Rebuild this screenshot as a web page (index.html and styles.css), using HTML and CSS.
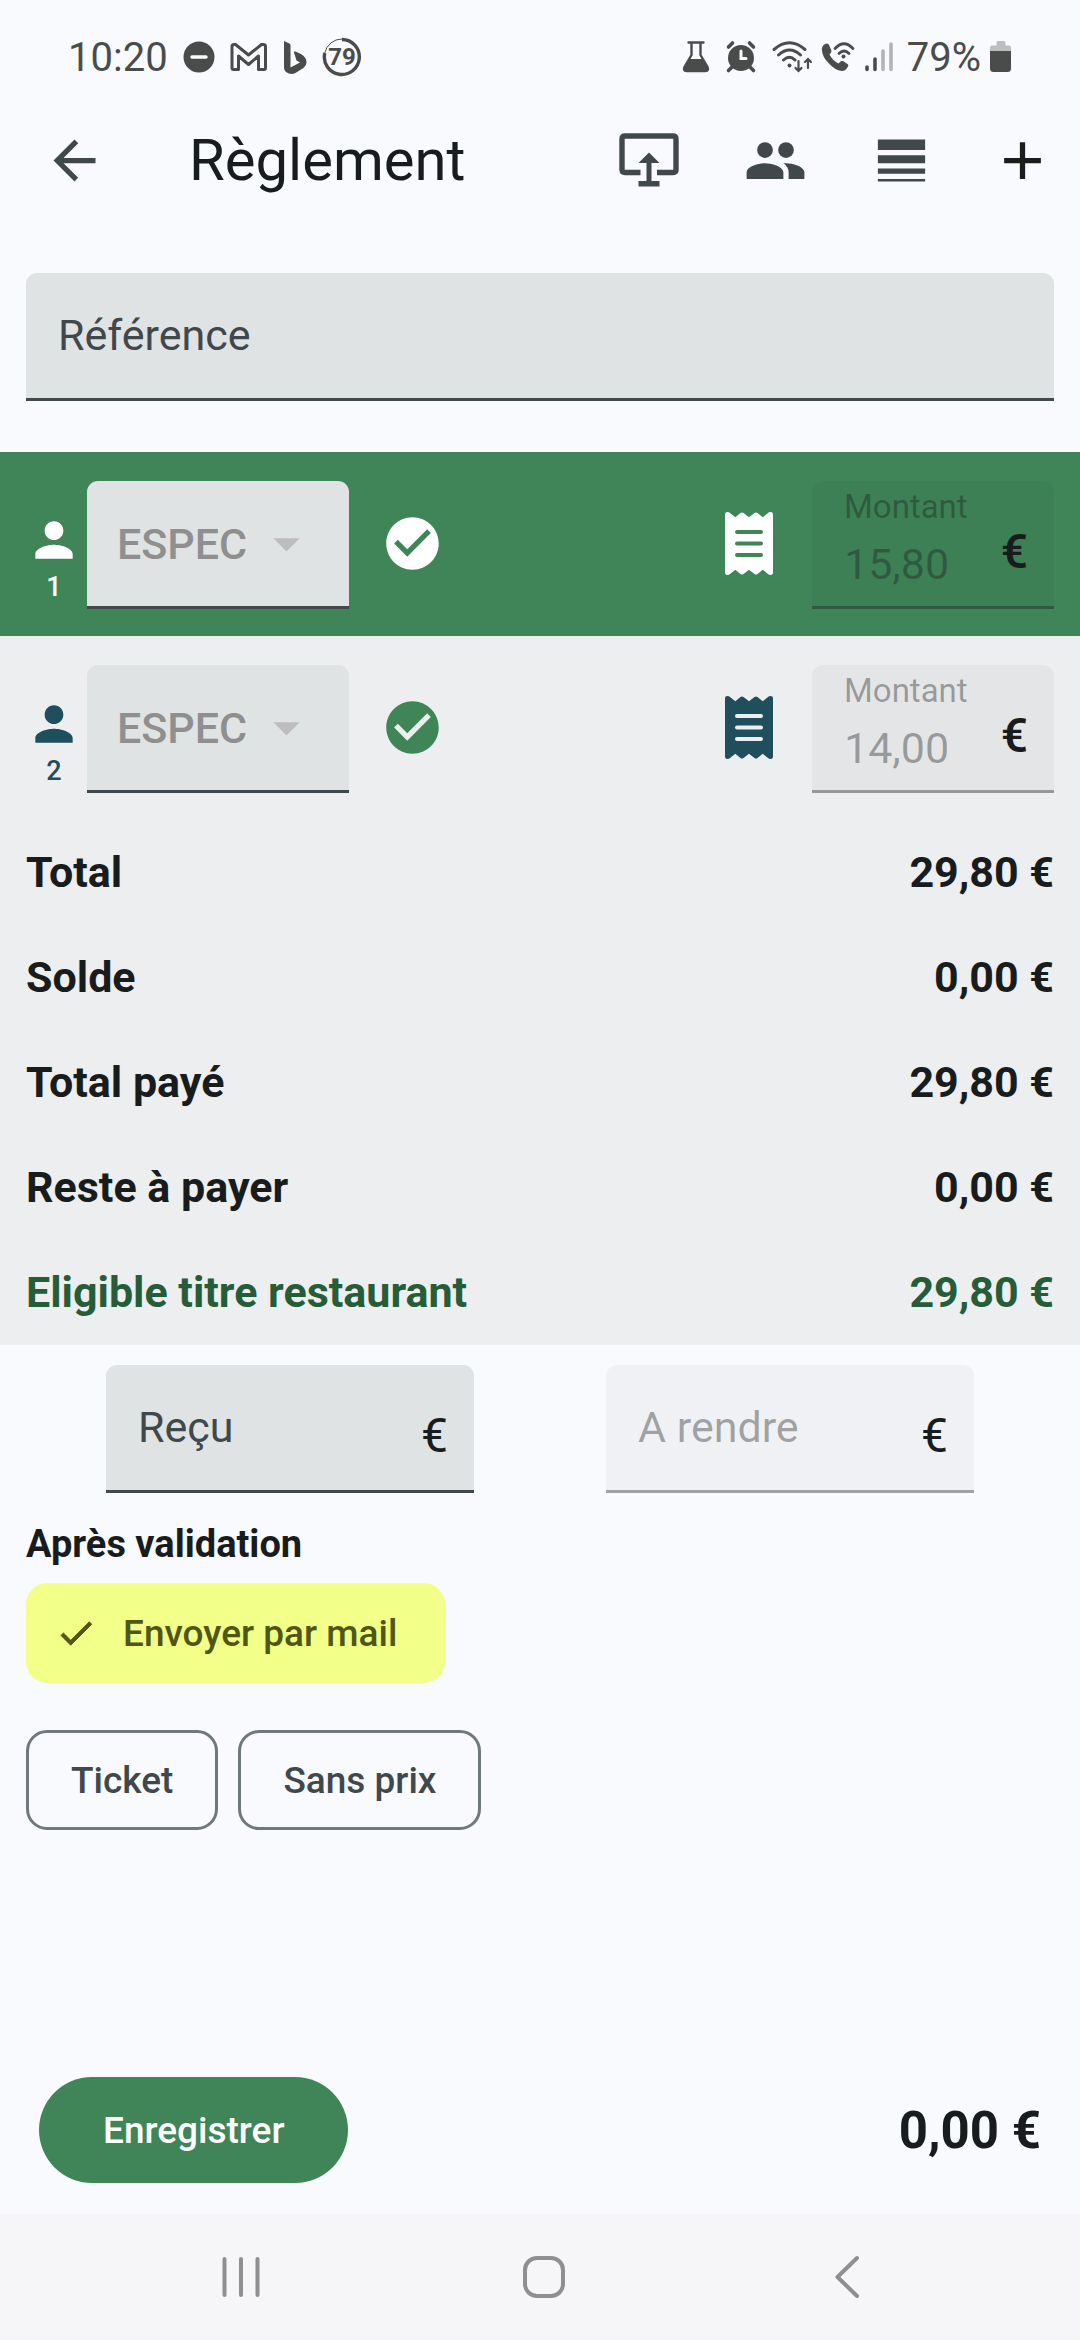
FILE: index.html
```html
<!DOCTYPE html>
<html lang="fr">
<head>
  <meta charset="UTF-8" />
  <meta name="viewport" content="width=device-width, initial-scale=1.0"/>
  <title>Règlement</title>
  <link rel="stylesheet" href="styles.css">
</head>
<body>

  <div class="status-bar">
    <div class="status-left">
      <span>10:20</span>
      <svg width="32" height="40" viewBox="0 0 32 40"><circle cx="16" cy="20" r="15.5" fill="currentColor"/><path d="M9 20h14" stroke="#f9fafd" stroke-width="3.4" stroke-linecap="round"/></svg>
      <svg width="38" height="40" viewBox="0 0 38 40" fill="none" stroke="currentColor" stroke-width="3" stroke-linejoin="round"><path d="M2 31V9.500Q2 7.500 4 7.500H5.500L18.500 18L31.500 7.500H33.500Q35.500 7.500 35.500 9.500V31Q35.500 32.500 34 32.500H28.500V19L18.500 27.500L8.500 19V32.500H3.500Q2 32.500 2 31Z"/></svg>
      <svg width="24" height="40" viewBox="0 0 24 40" fill="currentColor"><path d="M1 4l5.500 2.500Q7.500 7 7.500 8.500V30.500L17 25.500 13.500 23.500 11 15.500Q10.500 14 12.500 14.500L18 17Q23.500 20 23.500 25.500 23.500 28.500 20.500 31L12 36.200Q7.500 38 3 35 1 33.500 1 31Z"/></svg>
      <svg width="40" height="40" viewBox="0 0 40 40"><path d="M20 2.500A17.500 17.500 0 1 1 2.800 16" fill="none" stroke="currentColor" stroke-width="3.4"/><path d="M2.800 16A17.500 17.500 0 0 1 20 2" fill="none" stroke="currentColor" stroke-width="1"/><text class="ring-text" x="20" y="28" text-anchor="middle">79</text></svg>
    </div>
    <div class="status-right">
      <svg width="34" height="40" viewBox="0 0 34 40"><path d="M6.500 5.500h15M9.500 6v12L2.500 30Q1 34 4.500 34H23.500Q27 34 25.500 30L18.500 18V6" fill="none" stroke="currentColor" stroke-width="2.400" stroke-linecap="round"/><path d="M7 22h14l5 8.500q1 4.500-3 4.500H5q-4 0-3-4.500z" fill="currentColor"/></svg>
      <svg width="38" height="40" viewBox="0 0 38 40"><circle cx="16" cy="21" r="13" fill="currentColor"/><path d="M3.500 10l4-4M28.500 10l-4-4M7 30l-3.500 3.500M25 30l3.500 3.500" stroke="currentColor" stroke-width="3.600" stroke-linecap="round"/><path d="M16 14v7.500h5" fill="none" stroke="#f9fafd" stroke-width="3" stroke-linecap="round"/></svg>
      <svg width="40" height="40" viewBox="0 0 40 40" fill="none" stroke="currentColor" stroke-width="3" stroke-linecap="round"><path d="M2 12.500Q17.500-1 33 12.500M6.500 18Q17.500 8 28.500 18M11.500 23Q17.500 17.500 23 23"/><circle cx="17.500" cy="28.500" r="2" fill="currentColor" stroke="none"/><path d="M26.500 24v9.500M23.500 31l3 3 3-3M36 31v-9M33 25l3-3 3 3" stroke-width="2.200"/></svg>
      <svg width="34" height="40" viewBox="0 0 34 40"><path d="M6 6.500Q2 7 .8 11.500 1 20 8 26.500 13.500 33 21 34 24.500 34 27 29.500 28 28 26.500 27L22 24Q20 23.500 19 25L17.500 26.500Q11.500 23.500 8.500 17.500L10 15.500Q11 14.500 10 12.500L8 8Q7.500 6.500 6 6.500Z" fill="currentColor"/><path d="M14 11.500Q23 2 32 11.500M18 16.500Q23 11.500 28 16.500" fill="none" stroke="currentColor" stroke-width="2.800" stroke-linecap="round"/><circle cx="22.500" cy="19.500" r="2" fill="currentColor"/></svg>
      <svg width="34" height="40" viewBox="0 0 34 40" stroke="currentColor" stroke-width="3.600" stroke-linecap="round"><path d="M3 30v2.500M11 22v10.500"/><path d="M19 14v18.500M27 7v25.500" opacity=".4"/></svg>
      <span>79%</span>
      <svg width="22" height="40" viewBox="0 0 22 40" fill="currentColor"><path d="M6.500 5.500q0-1.500 1.500-1.500h6q1.500 0 1.500 1.500V8.500H19q2 0 2 2V14H0V10.500q0-2 2-2h4.500z" opacity=".35"/><path d="M0 14h21v17.500q0 3.500-3.500 3.500h-14Q0 35 0 31.500z"/></svg>
    </div>
  </div>

  <header class="app-bar">
    <button class="icon-btn" type="button" aria-label="Retour">
      <svg class="icon" viewBox="0 0 24 24"><path d="M20 11H7.830l5.590-5.590L12 4l-8 8 8 8 1.410-1.410L7.830 13H20v-2z"/></svg>
    </button>
    <h1>Règlement</h1>
    <button class="icon-btn" type="button" aria-label="Afficher sur l'écran client">
      <svg class="icon-screen" viewBox="0 0 60 54"><path d="M21.500 39.500H6Q3 39.500 3 36.500V6Q3 3 6 3H54Q57 3 57 6V36.500Q57 39.500 54 39.500H38" fill="none" stroke="currentColor" stroke-width="5.400"/><path d="M30 19.500L40.500 30H32.500V48H40.500V53.500H19.500V48H27.500V30H19.500Z" fill="currentColor"/></svg>
    </button>
    <button class="icon-btn" type="button" aria-label="Clients">
      <svg class="icon" viewBox="0 0 24 24"><circle cx="8" cy="8" r="3"/><circle cx="16" cy="8" r="3"/><path d="M8 13c-2.330 0-7 1.170-7 3.500V19h14v-2.500c0-2.330-4.670-3.500-7-3.500zm8 0c-.29 0-.62.020-.970.050 1.160.840 1.970 1.970 1.970 3.450V19h6v-2.500c0-2.330-4.670-3.500-7-3.500z"/></svg>
    </button>
    <button class="icon-btn" type="button" aria-label="Lignes">
      <svg class="icon" viewBox="0 0 24 24"><path d="M3 17h18v-2H3v2zm0 3h18v-1H3v1zm0-7h18v-3H3v3zm0-9v4h18V4H3z"/></svg>
    </button>
    <button class="icon-btn icon-btn-add" type="button" aria-label="Ajouter">
      <svg class="icon" viewBox="0 0 24 24"><path d="M19 13h-6v6h-2v-6H5v-2h6V5h2v6h6v2z"/></svg>
    </button>
  </header>

  <form class="payment-form">
    <div class="reference">
      <div class="field">
        <label for="reference">Référence</label>
        <input type="text" id="reference" />
      </div>
    </div>

    <div class="payments">
      <div class="payment selected">
        <div class="guest">
          <svg class="icon" viewBox="0 0 24 24"><path d="M12 12c2.210 0 4-1.790 4-4s-1.790-4-4-4-4 1.790-4 4 1.790 4 4 4zm0 2c-2.670 0-8 1.340-8 4v2h16v-2c0-2.660-5.330-4-8-4z"/></svg>
          <span>1</span>
        </div>
        <div class="select-field">
          <select id="mode1" aria-label="Mode de règlement 1" disabled>
            <option>ESPEC</option>
          </select>
          <svg class="icon arrow" viewBox="0 0 24 24"><path d="M7 10l5 5 5-5z"/></svg>
        </div>
        <svg class="icon check" viewBox="0 0 24 24"><path d="M12 2C6.480 2 2 6.480 2 12s4.480 10 10 10 10-4.480 10-10S17.520 2 12 2zm-2 15l-5-5 1.410-1.410L10 14.170l7.590-7.590L19 8l-9 9z"/></svg>
        <button class="receipt" type="button" aria-label="Ticket du règlement 1">
          <svg viewBox="0 0 48 63"><path fill-rule="evenodd" d="M0 2Q0 0 2.500 0 4 0 5 1L10.300 5.300 15.500 1Q17 0 18.500 1L24 5.300 29.500 1Q31 0 32.500 1L37.700 5.300 43 1Q44 0 45.500 0 48 0 48 2V61Q48 63 45.500 63 44 63 43 62L37.700 57.700 32.500 62Q31 63 29.500 62L24 57.700 18.500 62Q17 63 15.500 62L10.300 57.700 5 62Q4 63 2.500 63 0 63 0 61ZM12 18a2 2 0 0 0 0 4h24a2 2 0 0 0 0-4zM12 29.500a2 2 0 0 0 0 4h24a2 2 0 0 0 0-4zM12 41a2 2 0 0 0 0 4h24a2 2 0 0 0 0-4z"/></svg>
        </button>
        <div class="field field-amount disabled">
          <div class="amount">
            <label for="montant1">Montant</label>
            <input type="text" id="montant1" value="15,80" disabled />
          </div>
          <span class="euro">€</span>
        </div>
      </div>

      <div class="payment">
        <div class="guest">
          <svg class="icon" viewBox="0 0 24 24"><path d="M12 12c2.210 0 4-1.790 4-4s-1.790-4-4-4-4 1.790-4 4 1.790 4 4 4zm0 2c-2.670 0-8 1.340-8 4v2h16v-2c0-2.660-5.330-4-8-4z"/></svg>
          <span>2</span>
        </div>
        <div class="select-field">
          <select id="mode2" aria-label="Mode de règlement 2" disabled>
            <option>ESPEC</option>
          </select>
          <svg class="icon arrow" viewBox="0 0 24 24"><path d="M7 10l5 5 5-5z"/></svg>
        </div>
        <svg class="icon check" viewBox="0 0 24 24"><path d="M12 2C6.480 2 2 6.480 2 12s4.480 10 10 10 10-4.480 10-10S17.520 2 12 2zm-2 15l-5-5 1.410-1.410L10 14.170l7.590-7.590L19 8l-9 9z"/></svg>
        <button class="receipt" type="button" aria-label="Ticket du règlement 2">
          <svg viewBox="0 0 48 63"><path fill-rule="evenodd" d="M0 2Q0 0 2.500 0 4 0 5 1L10.300 5.300 15.500 1Q17 0 18.500 1L24 5.300 29.500 1Q31 0 32.500 1L37.700 5.300 43 1Q44 0 45.500 0 48 0 48 2V61Q48 63 45.500 63 44 63 43 62L37.700 57.700 32.500 62Q31 63 29.500 62L24 57.700 18.500 62Q17 63 15.500 62L10.300 57.700 5 62Q4 63 2.500 63 0 63 0 61ZM12 18a2 2 0 0 0 0 4h24a2 2 0 0 0 0-4zM12 29.500a2 2 0 0 0 0 4h24a2 2 0 0 0 0-4zM12 41a2 2 0 0 0 0 4h24a2 2 0 0 0 0-4z"/></svg>
        </button>
        <div class="field field-amount disabled">
          <div class="amount">
            <label for="montant2">Montant</label>
            <input type="text" id="montant2" value="14,00" disabled />
          </div>
          <span class="euro">€</span>
        </div>
      </div>

      <dl class="totals">
        <div><dt>Total</dt><dd>29,80 €</dd></div>
        <div><dt>Solde</dt><dd>0,00 €</dd></div>
        <div><dt>Total payé</dt><dd>29,80 €</dd></div>
        <div><dt>Reste à payer</dt><dd>0,00 €</dd></div>
        <div class="eligible"><dt>Eligible titre restaurant</dt><dd>29,80 €</dd></div>
      </dl>
    </div>

    <div class="change">
      <div class="field">
        <label for="recu">Reçu</label>
        <input type="text" id="recu" />
        <span class="euro">€</span>
      </div>
      <div class="field disabled">
        <label for="rendre">A rendre</label>
        <input type="text" id="rendre" disabled />
        <span class="euro">€</span>
      </div>
    </div>

    <section class="after">
      <h2>Après validation</h2>
      <div class="chips">
        <label class="chip">
          <input type="checkbox" checked />
          <svg viewBox="0 0 24 24"><path d="M9 16.170L4.830 12l-1.420 1.410L9 19 21 7l-1.410-1.410z" stroke="currentColor" stroke-width=".5"/></svg>
          Envoyer par mail
        </label>
      </div>
      <div class="chips">
        <label class="chip"><input type="checkbox" />Ticket</label>
        <label class="chip"><input type="checkbox" />Sans prix</label>
      </div>
    </section>

    <div class="footer">
      <button class="save" type="submit">Enregistrer</button>
      <output>0,00 €</output>
    </div>
  </form>

  <nav class="nav-bar">
    <button type="button" aria-label="Applications récentes">
      <svg width="44" height="44" viewBox="0 0 44 44"><path d="M5.500 4v36M22 4v36M38.500 4v36"/></svg>
    </button>
    <button type="button" aria-label="Accueil">
      <svg width="44" height="44" viewBox="0 0 44 44"><rect x="3" y="3" width="38" height="38" rx="12"/></svg>
    </button>
    <button type="button" aria-label="Précédent">
      <svg width="44" height="44" viewBox="0 0 44 44"><path d="M32 3L12.500 22 32 41"/></svg>
    </button>
  </nav>

</body>
</html>
```

FILE: styles.css
```css
* {
  box-sizing: border-box;
}

body {
  font-family: Roboto, 'Liberation Sans', sans-serif;
  background: #f9fafd;
  color: #191c1d;
  margin: 0;
  min-height: 100vh;
  display: flex;
  flex-direction: column;
}

button,
input,
select {
  font-family: inherit;
  border: none;
  margin: 0;
  padding: 0;
  background: none;
  color: inherit;
}

button {
  cursor: pointer;
}

svg {
  display: block;
  flex-shrink: 0;
}

.icon {
  width: 63px;
  height: 63px;
  fill: currentColor;
}

/* Status bar */
.status-bar {
  height: 114px;
  padding: 0 68px;
  display: flex;
  justify-content: space-between;
  align-items: center;
  color: #4a4c4b;
  font-size: 40px;
}

.status-left,
.status-right {
  display: flex;
  align-items: center;
}

.status-left {
  gap: 15px;
}

.status-right {
  gap: 9px;
}

.ring-text {
  font-size: 24px;
  font-weight: 700;
  fill: currentColor;
}

/* App bar */
.app-bar {
  height: 92px;
  padding-left: 11px;
  display: flex;
  align-items: center;
  color: #41484b;
}

.app-bar h1 {
  flex: 1;
  margin: 0 0 0 52px;
  font-size: 58px;
  font-weight: 400;
  color: #191c1d;
}

.icon-btn {
  width: 126px;
  height: 92px;
  display: flex;
  align-items: center;
  justify-content: center;
}

.icon-btn-add {
  width: 116px;
  color: #1c1c1c;
}

.icon-screen {
  width: 60px;
  height: 54px;
}

/* Form */
.payment-form {
  flex: 1;
  display: flex;
  flex-direction: column;
}

.reference {
  padding: 67px 26px 51px;
}

.field {
  height: 128px;
  padding: 0 26px 0 32px;
  display: flex;
  align-items: center;
  min-width: 0;
  border-radius: 11px 11px 0 0;
  border-bottom: 3px solid #41484b;
  background: #dfe3e4;
  font-size: 43px;
}

.field label {
  padding-bottom: 2px;
  color: #41484b;
  white-space: nowrap;
}

.field input {
  flex: 1;
  min-width: 0;
  font-size: 43px;
}

.field input:focus {
  outline: none;
}

.euro {
  padding-top: 16px;
  font-size: 48px;
}

.field.disabled {
  background: rgba(25, 28, 29, 0.04);
  border-bottom-color: rgba(25, 28, 29, 0.38);
}

.field.disabled label,
.field.disabled input {
  color: rgba(25, 28, 29, 0.38);
}

/* Payment lines */
.payments {
  background: #edeeef;
}

.payment {
  height: 184px;
  padding: 29px 26px 27px;
  display: flex;
  align-items: center;
  color: #1f4e5c;
}

.payment.selected {
  background: #3f8558;
  color: white;
}

.guest {
  width: 56px;
  margin-right: 5px;
  padding-top: 28px;
  display: flex;
  flex-direction: column;
  align-items: center;
  font-size: 27px;
  font-weight: 500;
  line-height: 38px;
}

.guest .icon {
  width: 56px;
  height: 56px;
}

.select-field {
  width: 262px;
  display: grid;
  align-items: center;
}

.select-field select,
.select-field .arrow {
  grid-area: 1 / 1;
}

.select-field select {
  appearance: none;
  height: 128px;
  padding-left: 30px;
  border-radius: 11px 11px 0 0;
  border-bottom: 3px solid #41484b;
  background: #dfe3e4;
  color: #8f8f8f;
  font-size: 43px;
  font-weight: 500;
  opacity: 1;
}

.select-field .arrow {
  justify-self: end;
  margin-right: 31px;
  color: #bdbdbd;
  pointer-events: none;
}

.check {
  margin-left: 32px;
  color: #3f8558;
}

.check,
.select-field .arrow,
.receipt {
  margin-bottom: 3px;
}

.selected .check {
  color: white;
}

.receipt {
  margin-left: auto;
  margin-right: 39px;
}

.receipt svg {
  width: 48px;
  height: 63px;
  fill: currentColor;
}

.field-amount {
  width: 242px;
}

.field-amount .euro {
  color: #191c1d;
  font-weight: 500;
}

.amount {
  flex: 1;
  min-width: 0;
  padding-bottom: 4px;
  display: flex;
  flex-direction: column;
}

.amount label {
  padding: 0;
  font-size: 33px;
  line-height: 44px;
}

.amount input {
  width: 100%;
  height: 70px;
  flex: none;
}

/* Totals */
.totals {
  margin: 0;
  padding: 0 26px;
  font-size: 43px;
  font-weight: 700;
}

.totals div {
  height: 105px;
  padding-bottom: 2px;
  display: flex;
  justify-content: space-between;
  align-items: center;
}

.totals dd {
  margin: 0;
}

.totals .eligible {
  color: #255d39;
}

/* Cash received and change */
.change {
  padding: 20px 106px 30px;
  display: grid;
  grid-template-columns: 1fr 1fr;
  gap: 132px;
}

/* Options after validation */
.after {
  padding: 0 26px;
}

.after h2 {
  margin: 0 0 18px;
  font-size: 38px;
  line-height: 42px;
}

.chips {
  display: flex;
  gap: 20px;
  margin-bottom: 47px;
}

.chip {
  height: 100px;
  padding: 0 42px;
  display: flex;
  align-items: center;
  border: 3px solid #6f797b;
  border-radius: 21px;
  color: #41484b;
  font-size: 37px;
  font-weight: 500;
  cursor: pointer;
}

.chip input {
  appearance: none;
  width: 0;
  height: 0;
}

.chip:has(input:checked) {
  padding-left: 26px;
  padding-right: 45px;
  border-color: #f2ff89;
  background: #f2ff89;
  color: #505614;
}

.chip svg {
  width: 42px;
  height: 42px;
  margin-right: 26px;
  fill: currentColor;
}

/* Footer */
.footer {
  margin-top: auto;
  padding: 0 39px 31px;
  display: flex;
  justify-content: space-between;
  align-items: center;
}

.save {
  height: 106px;
  padding: 0 64px;
  border-radius: 53px;
  background: #3f8558;
  color: white;
  font-size: 37px;
  font-weight: 500;
}

.footer output {
  font-size: 51px;
  font-weight: 700;
}

/* System navigation */
.nav-bar {
  height: 126px;
  padding: 0 82px 0 90px;
  display: grid;
  grid-template-columns: repeat(3, 1fr);
  background: #f6f6f8;
}

.nav-bar button {
  display: flex;
  align-items: center;
  justify-content: center;
}

.nav-bar svg {
  fill: none;
  stroke: #8f8f8f;
  stroke-width: 4;
  stroke-linecap: round;
  stroke-linejoin: round;
}
```
